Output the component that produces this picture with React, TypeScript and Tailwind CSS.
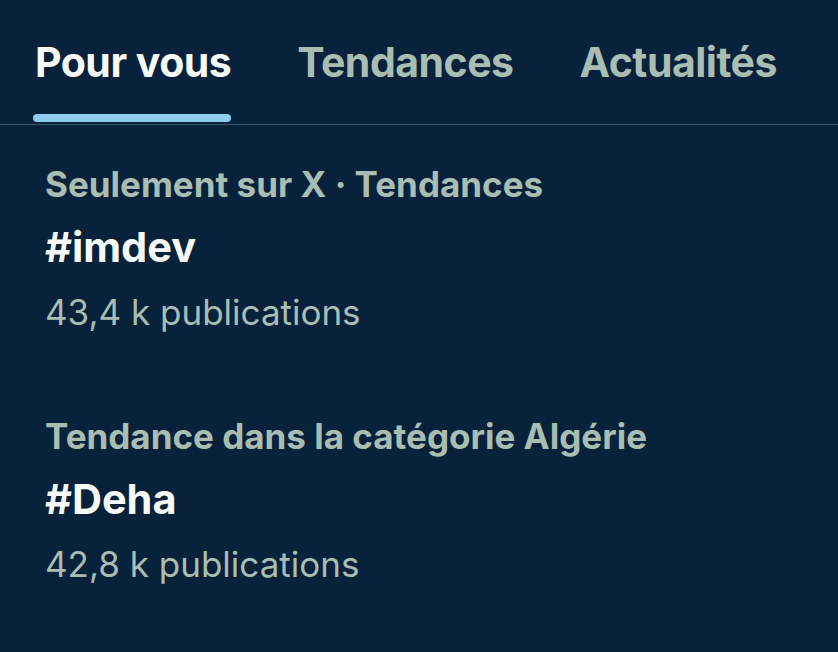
import React from "react";

const tabs = ["Pour vous", "Tendances", "Actualités"];

const trends = [
  { context: "Seulement sur X · Tendances", tag: "#imdev", count: "43,4 k publications" },
  { context: "Tendance dans la catégorie Algérie", tag: "#Deha", count: "42,8 k publications" },
];

export default function App() {
  return (
    <div className="w-[838px] h-[652px] overflow-hidden bg-[#07223a] font-['Inter',sans-serif]">
      {/* Tabs */}
      <div className="flex gap-[66px] pl-[35px] border-b border-[#35566d] h-[125px]">
        {tabs.map((t, i) => (
          <div key={t} className="flex flex-col items-stretch">
            <span
              className={
                "pt-[38px] text-[41px] leading-[48px] font-bold tracking-[-0.5px] " +
                (i === 0 ? "text-[#f7f9f6]" : "text-[#a9bdb2]")
              }
            >
              {t}
            </span>
            {i === 0 && <div className="mt-[28px] -ml-[2px] h-[8px] rounded-full bg-[#8ccdee]" />}
          </div>
        ))}
      </div>

      {/* Trends */}
      <div className="flex flex-col pl-[45px] pt-[39px] gap-[84px]">
        {trends.map((tr) => (
          <div key={tr.tag} className="flex flex-col">
            <span className="text-[35px] leading-[40px] font-bold text-[#a9bdb2]">{tr.context}</span>
            <span className="mt-[20px] text-[41.5px] leading-[46px] font-bold text-[#f7f9f6]">{tr.tag}</span>
            <span className="mt-[22px] text-[35px] leading-[40px] text-[#a9bdb2]">{tr.count}</span>
          </div>
        ))}
      </div>
    </div>
  );
}
